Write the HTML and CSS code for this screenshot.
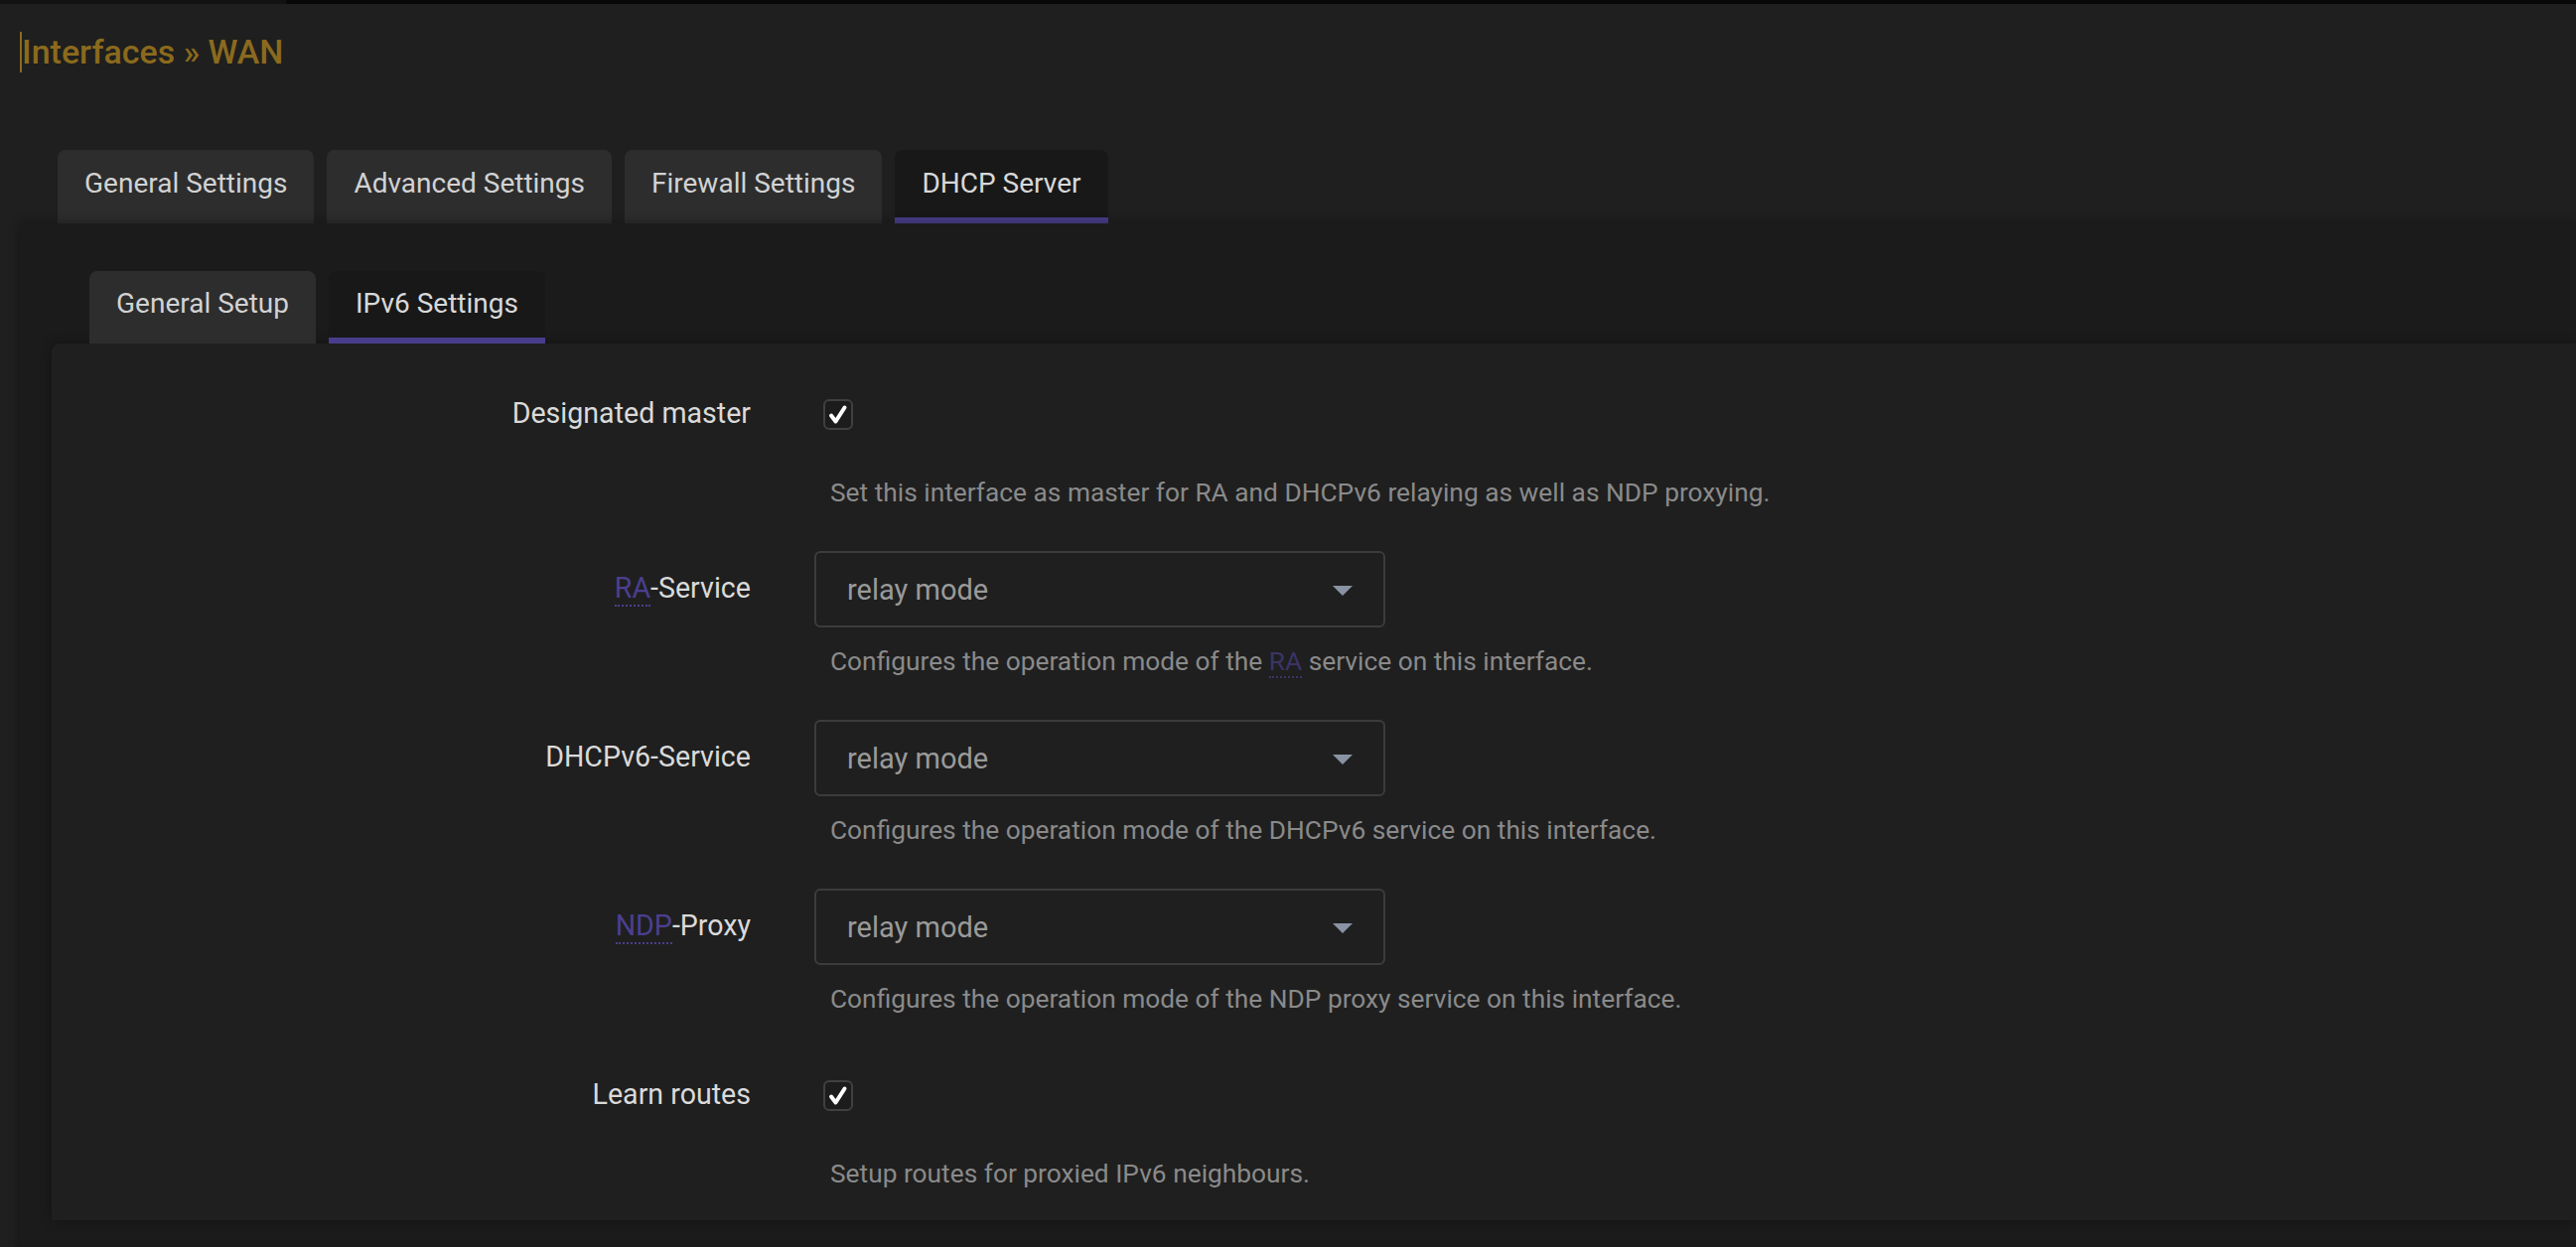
FILE: index.html
```html
<!DOCTYPE html>
<html lang="en">
<head>
<meta charset="utf-8">
<title>Interfaces » WAN</title>
<link rel="stylesheet" href="styles.css">
</head>
<body>
<div class="topbar"><div class="topbar-left"></div></div>
<h1 class="page-title">Interfaces » WAN</h1>
<ul class="tabs main-tabs">
  <li class="tab">General Settings</li>
  <li class="tab">Advanced Settings</li>
  <li class="tab">Firewall Settings</li>
  <li class="tab active">DHCP Server</li>
</ul>
<div class="panel">
  <ul class="tabs sub-tabs">
    <li class="tab">General Setup</li>
    <li class="tab active">IPv6 Settings</li>
  </ul>
  <div class="section">
    <div class="row row-check">
      <label class="label">Designated master</label>
      <div class="control">
        <span class="checkbox"><svg viewBox="0 0 30 31" width="30" height="31"><path d="M8 16.5 L12.5 22.5 L21.5 8.5" fill="none" stroke="#fff" stroke-width="4" stroke-linecap="round" stroke-linejoin="round"/></svg></span>
      </div>
      <div class="desc">Set this interface as master for RA and DHCPv6 relaying as well as NDP proxying.</div>
    </div>
    <div class="row">
      <label class="label"><abbr class="abbr">RA</abbr>-Service</label>
      <div class="control">
        <div class="select"><span>relay mode</span><svg class="arrow" viewBox="0 0 20 10" width="20" height="10"><path d="M0 0 H20 L10 10 Z" fill="#8993a3"/></svg></div>
      </div>
      <div class="desc">Configures the operation mode of the <abbr class="abbr dim">RA</abbr> service on this interface.</div>
    </div>
    <div class="row">
      <label class="label">DHCPv6-Service</label>
      <div class="control">
        <div class="select"><span>relay mode</span><svg class="arrow" viewBox="0 0 20 10" width="20" height="10"><path d="M0 0 H20 L10 10 Z" fill="#8993a3"/></svg></div>
      </div>
      <div class="desc">Configures the operation mode of the DHCPv6 service on this interface.</div>
    </div>
    <div class="row">
      <label class="label"><abbr class="abbr">NDP</abbr>-Proxy</label>
      <div class="control">
        <div class="select"><span>relay mode</span><svg class="arrow" viewBox="0 0 20 10" width="20" height="10"><path d="M0 0 H20 L10 10 Z" fill="#8993a3"/></svg></div>
      </div>
      <div class="desc">Configures the operation mode of the NDP proxy service on this interface.</div>
    </div>
    <div class="row row-check last">
      <label class="label">Learn routes</label>
      <div class="control">
        <span class="checkbox"><svg viewBox="0 0 30 31" width="30" height="31"><path d="M8 16.5 L12.5 22.5 L21.5 8.5" fill="none" stroke="#fff" stroke-width="4" stroke-linecap="round" stroke-linejoin="round"/></svg></span>
      </div>
      <div class="desc">Setup routes for proxied IPv6 neighbours.</div>
    </div>
  </div>
</div>
</body>
</html>
```

FILE: styles.css
```css
* { box-sizing: border-box; }

html, body {
  margin: 0;
  padding: 0;
  background: #1f1f1f;
  font-family: Roboto, "Noto Sans", Arial, sans-serif;
  color: #d6d6d6;
  overflow: hidden;
}

body {
  height: 1256px;
}

.topbar {
  height: 4px;
  background: #080808;
}

.topbar-left {
  width: 288px;
  height: 4px;
  background: #121212;
}

.page-title {
  margin: 28px 0 0 20px;
  padding: 0;
  border-left: 2px solid #8b6a1d;
  font-size: 34px;
  line-height: 41px;
  font-weight: 500;
  color: #8b6a1d;
  display: inline-block;
}

.tabs {
  list-style: none;
  display: flex;
  gap: 13px;
  padding: 0;
  margin: 0;
}

.main-tabs {
  margin: 78px 0 0 58px;
}

.tab {
  font-size: 28px;
  line-height: 34px;
  padding: 17px 27px 17px;
  border-bottom: 6px solid transparent;
  background: #2d2d2d;
  color: #d2d2d2;
  border-radius: 8px 8px 0 0;
}

.tab.active {
  background: #181818;
  border-bottom-color: #483d8b;
  color: #d8d8d8;
}

.panel {
  margin-left: 20px;
  padding: 48px 0 40px 0;
  background: #1b1b1b;
  border-radius: 8px 0 0 0;
  box-shadow: 0 0 12px rgba(0, 0, 0, 0.35);
  position: relative;
}

.sub-tabs {
  margin-left: 70px;
}

.sub-tabs .tab {
  padding-top: 16px;
}

.section {
  margin-left: 32px;
  padding: 33px 0 32px 0;
  background: #1f1f1f;
  border-radius: 8px 0 0 0;
  box-shadow: 0 0 12px rgba(0, 0, 0, 0.35);
}

.row {
  display: grid;
  grid-template-columns: 704px 1fr;
  column-gap: 64px;
  margin-bottom: 44px;
}

.row.last {
  margin-bottom: 0;
}

.label {
  grid-column: 1;
  grid-row: 1;
  align-self: center;
  text-align: right;
  font-size: 28.6px;
  line-height: 34px;
  padding-bottom: 4px;
  color: #dadada;
}

.control {
  grid-column: 2;
  grid-row: 1;
  height: 77px;
  display: flex;
  align-items: center;
}

.desc {
  grid-column: 2;
  grid-row: 2;
  margin-top: 19px;
  padding-left: 16px;
  font-size: 26.3px;
  line-height: 30px;
  color: #8a8a8a;
  white-space: nowrap;
}

.row-check .desc {
  margin-top: 25px;
}

.abbr {
  text-decoration: none;
  color: #4b3f91;
  border-bottom: 2px dotted #4b3f91;
}

.abbr.dim {
  color: #3b3466;
  border-bottom-color: #3b3466;
}

.checkbox {
  display: block;
  width: 30px;
  height: 31px;
  margin-left: 9px;
  border: 2px solid #404040;
  border-radius: 6px;
  background: #1c1c1c;
  position: relative;
}

.checkbox svg {
  position: absolute;
  left: -2px;
  top: -2px;
}

.select {
  width: 575px;
  height: 77px;
  border: 2px solid #3c3c3c;
  border-radius: 6px;
  background: #1f1f1f;
  display: flex;
  align-items: center;
  justify-content: space-between;
  padding: 0 31px;
  font-size: 29px;
  color: #9a9a9a;
}

.arrow {
  display: block;
  margin-top: 2px;
}
```
